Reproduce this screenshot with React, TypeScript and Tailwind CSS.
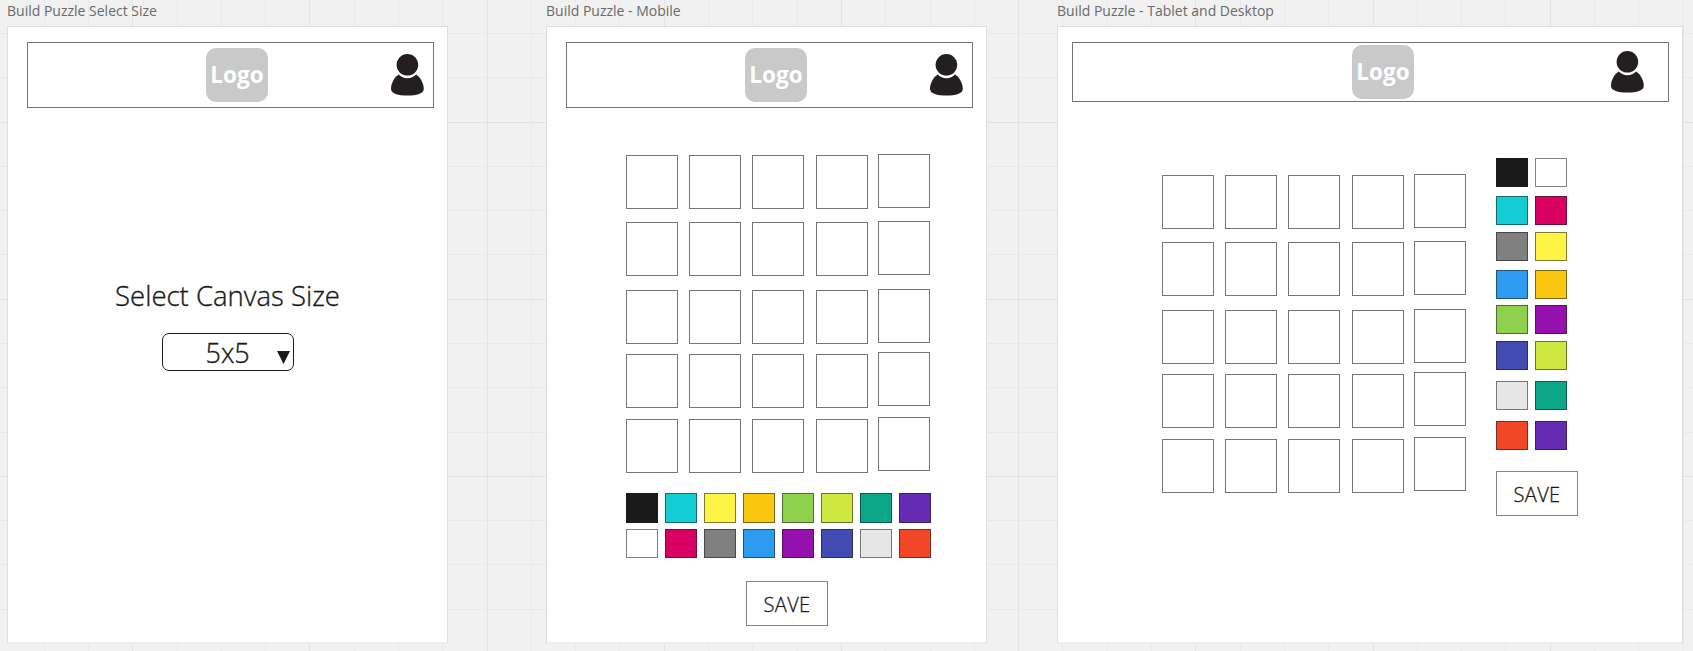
import type { ReactNode } from "react";

const VERTICALS = Array.from({ length: 39 }, (_, i) => ({
  at: Math.floor(-0.2 + i * 44.3),
  major: i % 4 === 3,
}));
const HORIZONTALS = Array.from({ length: 14 }, (_, i) => ({
  at: Math.floor(33.4 + i * 44.3),
  major: i % 4 === 2,
}));

function CanvasGrid() {
  return (
    <svg className="absolute inset-0" width="1693" height="651" aria-hidden="true">
      {VERTICALS.map(({ at, major }) => (
        <rect key={at} x={at} y={0} width={1} height={651} fill={major ? "#e2e2e2" : "#e9e9e9"} />
      ))}
      {HORIZONTALS.map(({ at, major }) => (
        <rect key={at} x={0} y={at} width={1693} height={1} fill={major ? "#e2e2e2" : "#e9e9e9"} />
      ))}
    </svg>
  );
}

function Frame({ title, className, children }: { title: string; className: string; children: ReactNode }) {
  return (
    <section className={`relative flex shrink-0 flex-col ${className}`}>
      <h2 className="h-[26px] pt-px text-[14px] leading-[20px] whitespace-nowrap text-[#6a6a6a]">{title}</h2>
      <div className="flex h-[618px] flex-col border border-b-2 border-[#dedede] border-b-[#ededed] bg-white">
        {children}
      </div>
    </section>
  );
}

function Logo() {
  return (
    <div className="flex h-[54px] w-[62px] justify-center rounded-[10px] bg-[#c9c9c9] pt-[12px] text-[22.5px] leading-[30px] font-bold text-white">
      Logo
    </div>
  );
}

function UserIcon() {
  return (
    <svg width="33" height="42" viewBox="0 0 33 42" fill="#231f20" aria-label="Account">
      <ellipse cx="16.4" cy="10.8" rx="10.8" ry="10.8" />
      <path d="M7.7 20.6C10 23 13 24.2 16.4 24.2S22.8 23 25.1 20.6C29.5 23.2 32.8 29.6 32.8 35C32.8 39.6 25.6 41.6 16.4 41.6S0 39.6 0 35C0 29.6 3.3 23.2 7.7 20.6Z" />
    </svg>
  );
}

function MobileHeader() {
  return (
    <header className="mt-[15px] ml-[19px] flex h-[66px] w-[407px] shrink-0 items-start border border-[#757575] pl-[178px]">
      <div className="mt-[5px]">
        <Logo />
      </div>
      <div className="mt-[11px] ml-[123px]">
        <UserIcon />
      </div>
    </header>
  );
}

function DesktopHeader() {
  return (
    <header className="mt-[15px] ml-[14px] flex h-[60px] w-[597px] shrink-0 items-start border border-[#757575] pl-[279px]">
      <div className="mt-[2px]">
        <Logo />
      </div>
      <div className="mt-[8px] ml-[197px]">
        <UserIcon />
      </div>
    </header>
  );
}

const ROWS = [
  { row: "", last: "-mt-px" },
  { row: "mt-[13px]", last: "-mt-px" },
  { row: "mt-[14px]", last: "-mt-px" },
  { row: "mt-[10px]", last: "-mt-[2px]" },
  { row: "mt-[11px]", last: "-mt-[2px]" },
];

function Board() {
  const cell = "h-[54px] w-[52px] shrink-0 border border-[#757575]";
  return (
    <div className="w-[304px] shrink-0">
      {ROWS.map(({ row, last }, i) => (
        <div key={i} className={`flex h-[54px] items-start ${row}`}>
          <div className={cell} />
          <div className={`ml-[11px] ${cell}`} />
          <div className={`ml-[11px] ${cell}`} />
          <div className={`ml-[12px] ${cell}`} />
          <div className={`ml-[10px] ${last} ${cell}`} />
        </div>
      ))}
    </div>
  );
}

function Swatch({ color, className }: { color: string; className: string }) {
  return <div className={`w-[32px] shrink-0 border border-[#1a1a1a]/55 ${className} ${color}`} />;
}

const PALETTE_TOP = [
  "bg-[#1a1a1a]",
  "bg-[#12cdd4]",
  "bg-[#fef445]",
  "bg-[#fac710]",
  "bg-[#8fd14f]",
  "bg-[#cee741]",
  "bg-[#0ca789]",
  "bg-[#652cb3]",
];
const PALETTE_BOTTOM = [
  "bg-white",
  "bg-[#da0063]",
  "bg-[#808080]",
  "bg-[#2d9bf0]",
  "bg-[#9510ac]",
  "bg-[#414bb2]",
  "bg-[#e6e6e6]",
  "bg-[#f24726]",
];
const PALETTE_SIDE = [
  { gap: "", left: "bg-[#1a1a1a]", right: "bg-white" },
  { gap: "mt-[9px]", left: "bg-[#12cdd4]", right: "bg-[#da0063]" },
  { gap: "mt-[7px]", left: "bg-[#808080]", right: "bg-[#fef445]" },
  { gap: "mt-[9px]", left: "bg-[#2d9bf0]", right: "bg-[#fac710]" },
  { gap: "mt-[6px]", left: "bg-[#8fd14f]", right: "bg-[#9510ac]" },
  { gap: "mt-[7px]", left: "bg-[#414bb2]", right: "bg-[#cee741]" },
  { gap: "mt-[11px]", left: "bg-[#e6e6e6]", right: "bg-[#0ca789]" },
  { gap: "mt-[11px]", left: "bg-[#f24726]", right: "bg-[#652cb3]" },
];

function SaveButton() {
  return (
    <button className="flex h-[45px] w-[82px] items-center justify-center border border-[#858585] pt-[2px] text-[20px] leading-none font-light tracking-[0.4px] text-[#1a1a1a] [-webkit-text-stroke:0.3px_#1a1a1a]">
      SAVE
    </button>
  );
}

export default function App() {
  return (
    <main className="relative flex h-[651px] w-[1693px] overflow-hidden bg-[#f1f1f1] pl-[7px] font-['Open_Sans','Noto_Sans',sans-serif]">
      <CanvasGrid />

      <Frame title="Build Puzzle Select Size" className="w-[441px]">
        <MobileHeader />
        <div className="mt-[168px] flex flex-col items-center">
          <label className="text-[27.5px] leading-[40px] font-light whitespace-nowrap text-[#1a1a1a] [-webkit-text-stroke:0.35px_#1a1a1a]">
            Select Canvas Size
          </label>
          <button className="mt-[17px] flex h-[38px] w-[132px] items-start rounded-[7px] border border-[#1a1a1a] pl-[43px] text-[27px] font-light text-[#1a1a1a] [-webkit-text-stroke:0.35px_#1a1a1a]">
            <span className="leading-[37px]">5x5</span>
            <svg className="mt-[17px] mr-[3px] ml-auto" width="13" height="13" viewBox="0 0 13 13" aria-hidden="true">
              <path d="M0 0H13L6.5 13Z" fill="#1a1a1a" />
            </svg>
          </button>
        </div>
      </Frame>

      <Frame title="Build Puzzle - Mobile" className="ml-[98px] w-[441px]">
        <MobileHeader />
        <div className="mt-[47px] ml-[79px]">
          <Board />
          <div className="mt-[20px] flex gap-[7px]">
            {PALETTE_TOP.map((c) => (
              <Swatch key={c} color={c} className="h-[30px]" />
            ))}
          </div>
          <div className="mt-[6px] flex gap-[7px]">
            {PALETTE_BOTTOM.map((c) => (
              <Swatch key={c} color={c} className="h-[29px]" />
            ))}
          </div>
          <div className="mt-[23px] ml-[120px]">
            <SaveButton />
          </div>
        </div>
      </Frame>

      <Frame title="Build Puzzle - Tablet and Desktop" className="ml-[70px] w-[626px]">
        <DesktopHeader />
        <div className="mt-[56px] ml-[104px] flex items-start">
          <div className="mt-[17px]">
            <Board />
          </div>
          <div className="ml-[30px]">
            {PALETTE_SIDE.map(({ gap, left, right }) => (
              <div key={left} className={`flex gap-[7px] ${gap}`}>
                <Swatch color={left} className="h-[29px]" />
                <Swatch color={right} className="h-[29px]" />
              </div>
            ))}
            <div className="mt-[21px]">
              <SaveButton />
            </div>
          </div>
        </div>
      </Frame>
    </main>
  );
}
